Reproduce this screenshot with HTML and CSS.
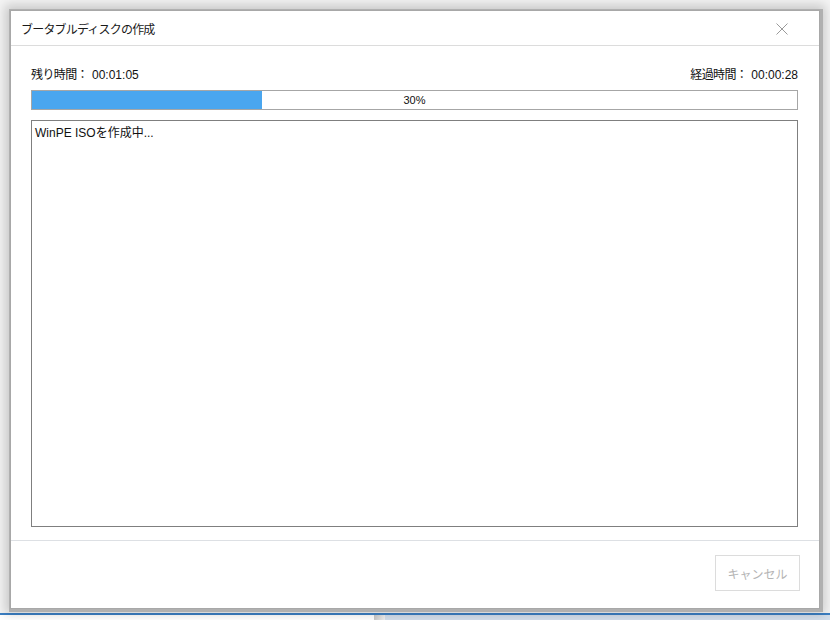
FILE: index.html
```html
<!DOCTYPE html>
<html lang="ja">
<head>
<meta charset="utf-8">
<title>ブータブルディスクの作成</title>
<link rel="stylesheet" href="styles.css">
</head>
<body>
<div class="screen">
  <div class="dialog">
    <div class="titlebar">
      <span class="title">ブータブルディスクの作成</span>
      <svg class="close" width="12" height="12" viewBox="0 0 12 12"><path d="M0.5 0.5 L11.5 11.5 M11.5 0.5 L0.5 11.5" stroke="#9a9a9a" stroke-width="1" fill="none"/></svg>
    </div>
    <div class="content">
      <div class="times">
        <span><span class="jp">残り時間：</span>00:01:05</span>
        <span><span class="jp">経過時間：</span>00:00:28</span>
      </div>
      <div class="progress">
        <div class="fill" style="width:30%"></div>
        <span class="pct">30%</span>
      </div>
      <div class="log">WinPE ISOを作成中...</div>
    </div>
    <div class="footer">
      <button class="btn" disabled>キャンセル</button>
    </div>
  </div>
  <div class="taskbar">
    <div class="tb-left"></div>
    <div class="tb-sep"></div>
    <div class="tb-right"></div>
  </div>
</div>
</body>
</html>
```
FILE: styles.css
```css
html, body {
  margin: 0;
  padding: 0;
}
body {
  font-family: "Liberation Sans", "Noto Sans CJK JP", sans-serif;
  font-size: 12px;
  color: #111;
  background: #fff;
}
.screen {
  width: 830px;
  height: 620px;
  overflow: hidden;
  display: flex;
  flex-direction: column;
  background: #f4f4f4;
}
.dialog {
  position: relative;
  z-index: 2;
  margin: 11px 0 0 11px;
  width: 808px;
  height: 597px;
  background: #fff;
  display: flex;
  flex-direction: column;
  box-shadow: 0 0 0 1px #a8a8a8, 1px 1px 0 3px #b0b0b0, 0 0 10px 6px rgba(0,0,0,0.18);
}
.titlebar {
  height: 34px;
  border-bottom: 1px solid #dcdcdc;
  display: flex;
  align-items: center;
  justify-content: space-between;
  padding: 0 31px 0 10px;
}
.title {
  font-size: 12px;
  letter-spacing: -0.8px;
  color: #1a1a1a;
  margin-top: 1px;
}
.close {
  display: block;
  margin-top: 1px;
}
.content {
  padding: 18px 21px 13px 20px;
  display: flex;
  flex-direction: column;
  border-bottom: 1px solid #dde0e4;
}
.times {
  height: 18px;
  display: flex;
  justify-content: space-between;
  align-items: center;
  font-size: 12px;
  color: #111;
}
.jp {
  letter-spacing: -0.6px;
  margin-right: 4px;
}
.progress {
  position: relative;
  margin-top: 8px;
  height: 18px;
  border: 1px solid #a6a6a6;
  background: #fff;
}
.fill {
  height: 100%;
  background: #4aa6ef;
}
.pct {
  position: absolute;
  left: 0;
  right: 0;
  top: 0;
  bottom: 0;
  display: flex;
  align-items: center;
  justify-content: center;
  font-size: 11px;
  color: #111;
}
.log {
  margin-top: 10px;
  height: 401px;
  border: 1px solid #7f7f7f;
  padding: 2px 3px;
  font-size: 12px;
  color: #111;
}
.footer {
  flex: 1;
  display: flex;
  justify-content: flex-end;
  align-items: flex-start;
  padding: 14px 19px 0 0;
}
.btn {
  width: 85px;
  height: 36px;
  border: 1px solid #dcdcdc;
  background: #fff;
  color: #b4b4b4;
  font-family: "Liberation Sans", "Noto Sans CJK JP", sans-serif;
  font-size: 12px;
  padding: 0;
}
.taskbar {
  margin-top: 5px;
  border-top: 2px solid #3b7fc4;
  flex: 1;
  display: flex;
  position: relative;
  z-index: 1;
}
.tb-left {
  width: 374px;
  background: #fff;
}
.tb-sep {
  width: 11px;
  background: linear-gradient(to right, #c8c8c8, #f0f0f0);
}
.tb-right {
  flex: 1;
  background: #d3deeb;
}
```
